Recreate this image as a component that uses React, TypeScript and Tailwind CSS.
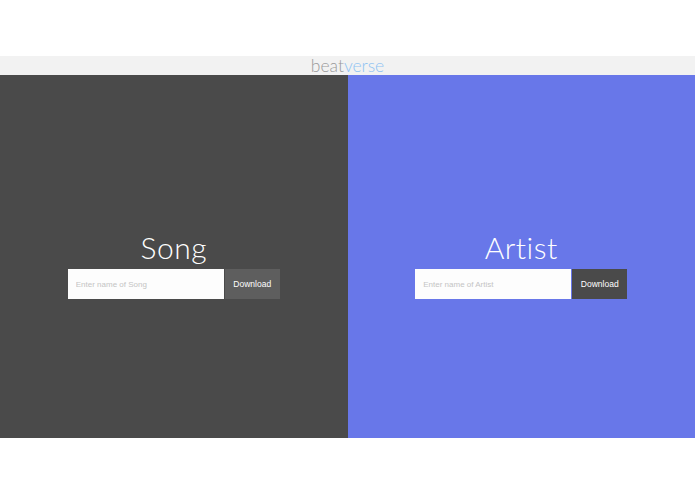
import React from 'react';

const Panel: React.FC<{ title: string; bg: string; btn: string; placeholder: string }> = ({
  title,
  bg,
  btn,
  placeholder,
}) => (
  <div className={`flex-1 flex flex-col items-center justify-center pt-[15px] ${bg}`}>
    <h1 className="text-[30px] leading-[36px] mb-[4px] font-light text-white font-['Lato',sans-serif] tracking-[0.5px]">
      {title}
    </h1>
    <div className="flex gap-px">
      <input
        className="w-[156px] h-[30px] bg-[#fdfdfd] px-2 text-[8px] text-gray-700 placeholder:text-[#c4c4c4] outline-none font-['Liberation_Sans',sans-serif]"
        placeholder={placeholder}
      />
      <button
        className={`w-[55px] h-[30px] text-white text-[8.5px] font-['Liberation_Sans',sans-serif] ${btn}`}
      >
        Download
      </button>
    </div>
  </div>
);

export default function App() {
  return (
    <div className="w-[695px] h-[494px] bg-white flex flex-col">
      <div className="h-[56px]" />
      <div className="h-[19px] bg-[#f2f2f2] flex items-center justify-center">
        <span className="text-[17.5px] leading-none font-light font-['Lato',sans-serif] text-[#9a9a9a]">
          beat<span className="text-[#8fc3f2]">verse</span>
        </span>
      </div>
      <div className="h-[363px] flex">
        <Panel title="Song" bg="bg-[#4a4a4a]" btn="bg-[#5e5e5e]" placeholder="Enter name of Song" />
        <Panel title="Artist" bg="bg-[#6877e9]" btn="bg-[#4a4a4a]" placeholder="Enter name of Artist" />
      </div>
    </div>
  );
}
